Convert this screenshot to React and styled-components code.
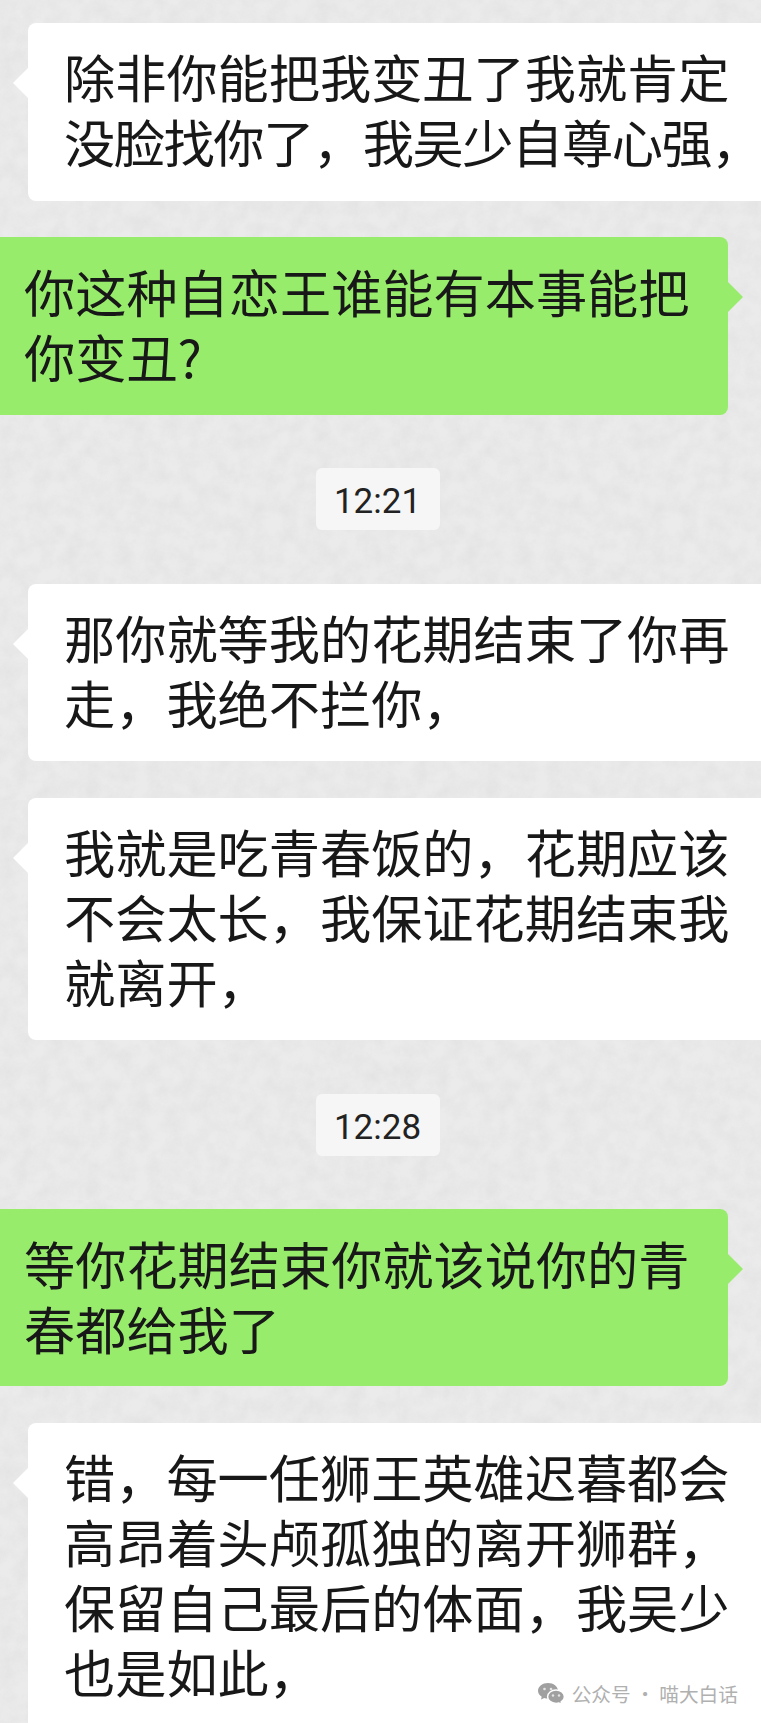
import React from 'react'
import styled, { createGlobalStyle } from 'styled-components'

const noise = `url("data:image/svg+xml,%3Csvg xmlns='http://www.w3.org/2000/svg' width='400' height='400'%3E%3Cfilter id='n'%3E%3CfeTurbulence type='fractalNoise' baseFrequency='0.06' numOctaves='4' stitchTiles='stitch'/%3E%3CfeColorMatrix values='0 0 0 0 0.6 0 0 0 0 0.6 0 0 0 0 0.6 0.4 0 0 0 -0.12'/%3E%3C/filter%3E%3Crect width='400' height='400' filter='url(%23n)'/%3E%3C/svg%3E")`

const GlobalStyle = createGlobalStyle`
  html, body {
    margin: 0;
    padding: 0;
  }
  body {
    font-family: "Noto Sans CJK SC", "Noto Sans", sans-serif;
  }
`

const Page = styled.div`
  position: relative;
  width: 761px;
  height: 1723px;
  overflow: hidden;
  background-color: #ebebeb;
  background-image: ${noise};
  display: flex;
  flex-direction: column;
  padding-top: 23px;
  box-sizing: border-box;
`

const Bubble = styled.div`
  position: relative;
  box-sizing: border-box;
  height: ${p => p.$height}px;
  margin-top: ${p => p.$gap}px;
  margin-left: ${p => (p.$mine ? 0 : 28)}px;
  margin-right: ${p => (p.$mine ? 33 : 0)}px;
  padding: ${p => (p.$mine ? '22px 0 0 24px' : '21px 0 0 36px')};
  background: ${p => (p.$mine ? '#98ec6c' : '#ffffff')};
  border-radius: ${p => (p.$mine ? '0 8px 8px 0' : '8px 0 0 8px')};
  color: #181818;
  font-size: 51.2px;
  line-height: 65px;
  white-space: pre;
  flex: none;

  &::before {
    content: '';
    position: absolute;
    top: 44px;
    ${p => (p.$mine ? 'right: -15px;' : 'left: -15px;')}
    border-top: 16px solid transparent;
    border-bottom: 16px solid transparent;
    ${p => (p.$mine ? 'border-left: 16px solid #98ec6c;' : 'border-right: 16px solid #ffffff;')}
  }
`

const TightLine = styled.span`
  letter-spacing: -1.4px;
`

const TimeStamp = styled.div`
  align-self: center;
  flex: none;
  width: 124px;
  height: 62px;
  margin-top: ${p => p.$gap}px;
  margin-left: -6px;
  border-radius: 6px;
  background: #f6f6f6;
  color: #222;
  font-family: Roboto, "Liberation Sans", sans-serif;
  font-size: 35px;
  line-height: 67px;
  text-align: center;
`

const Watermark = styled.div`
  position: absolute;
  right: 23px;
  bottom: 16px;
  display: flex;
  align-items: center;
  gap: 7px;
  color: #b0b0b0;
  font-size: 19.7px;
  line-height: 26px;
  white-space: nowrap;
`

const WechatIcon = () => (
  <svg width="27" height="23" viewBox="0 0 27 23" aria-hidden="true">
    <path fill="#a0a0a0" d="M10 0C4.500 0 0 3.500 0 7.800c0 2.500 1.500 4.600 3.700 6l-.7 2.700 3.200-1.600c1.200.4 2.500.6 3.800.6 5.500 0 10-3.400 10-7.700S15.500 0 10 0z" />
    <path fill="#a0a0a0" stroke="#ffffff" strokeWidth="1.500" d="M18 7c-4.700 0-8.400 3-8.400 6.700s3.700 6.700 8.400 6.700c1 0 2-.1 2.900-.4l3 1.500-.7-2.500c2-1.200 3.200-3.100 3.200-5.300C26.400 10 22.700 7 18 7z" />
    <circle cx="6.500" cy="6" r="1.300" fill="#e4e4e4" />
    <circle cx="13" cy="6" r="1.300" fill="#e4e4e4" />
    <circle cx="15" cy="12.500" r="1.200" fill="#e4e4e4" />
    <circle cx="21" cy="12.500" r="1.200" fill="#e4e4e4" />
  </svg>
)

const App = () => (
  <Page>
    <GlobalStyle />
    <Bubble $height={178} $gap={0}>
      {'除非你能把我变丑了我就肯定\n'}
      <TightLine>没脸找你了，我吴少自尊心强，</TightLine>
    </Bubble>
    <Bubble $mine $height={178} $gap={36}>{'你这种自恋王谁能有本事能把\n你变丑?'}</Bubble>
    <TimeStamp $gap={53}>12:21</TimeStamp>
    <Bubble $height={177} $gap={54}>{'那你就等我的花期结束了你再\n走，我绝不拦你，'}</Bubble>
    <Bubble $height={242} $gap={37}>{'我就是吃青春饭的，花期应该\n不会太长，我保证花期结束我\n就离开，'}</Bubble>
    <TimeStamp $gap={54}>12:28</TimeStamp>
    <Bubble $mine $height={177} $gap={53}>{'等你花期结束你就该说你的青\n春都给我了'}</Bubble>
    <Bubble $height={320} $gap={37}>{'错，每一任狮王英雄迟暮都会\n高昂着头颅孤独的离开狮群，\n保留自己最后的体面，我吴少\n也是如此，'}</Bubble>
    <Watermark>
      <WechatIcon />
      <span>公众号 · 喵大白话</span>
    </Watermark>
  </Page>
)

export default App
